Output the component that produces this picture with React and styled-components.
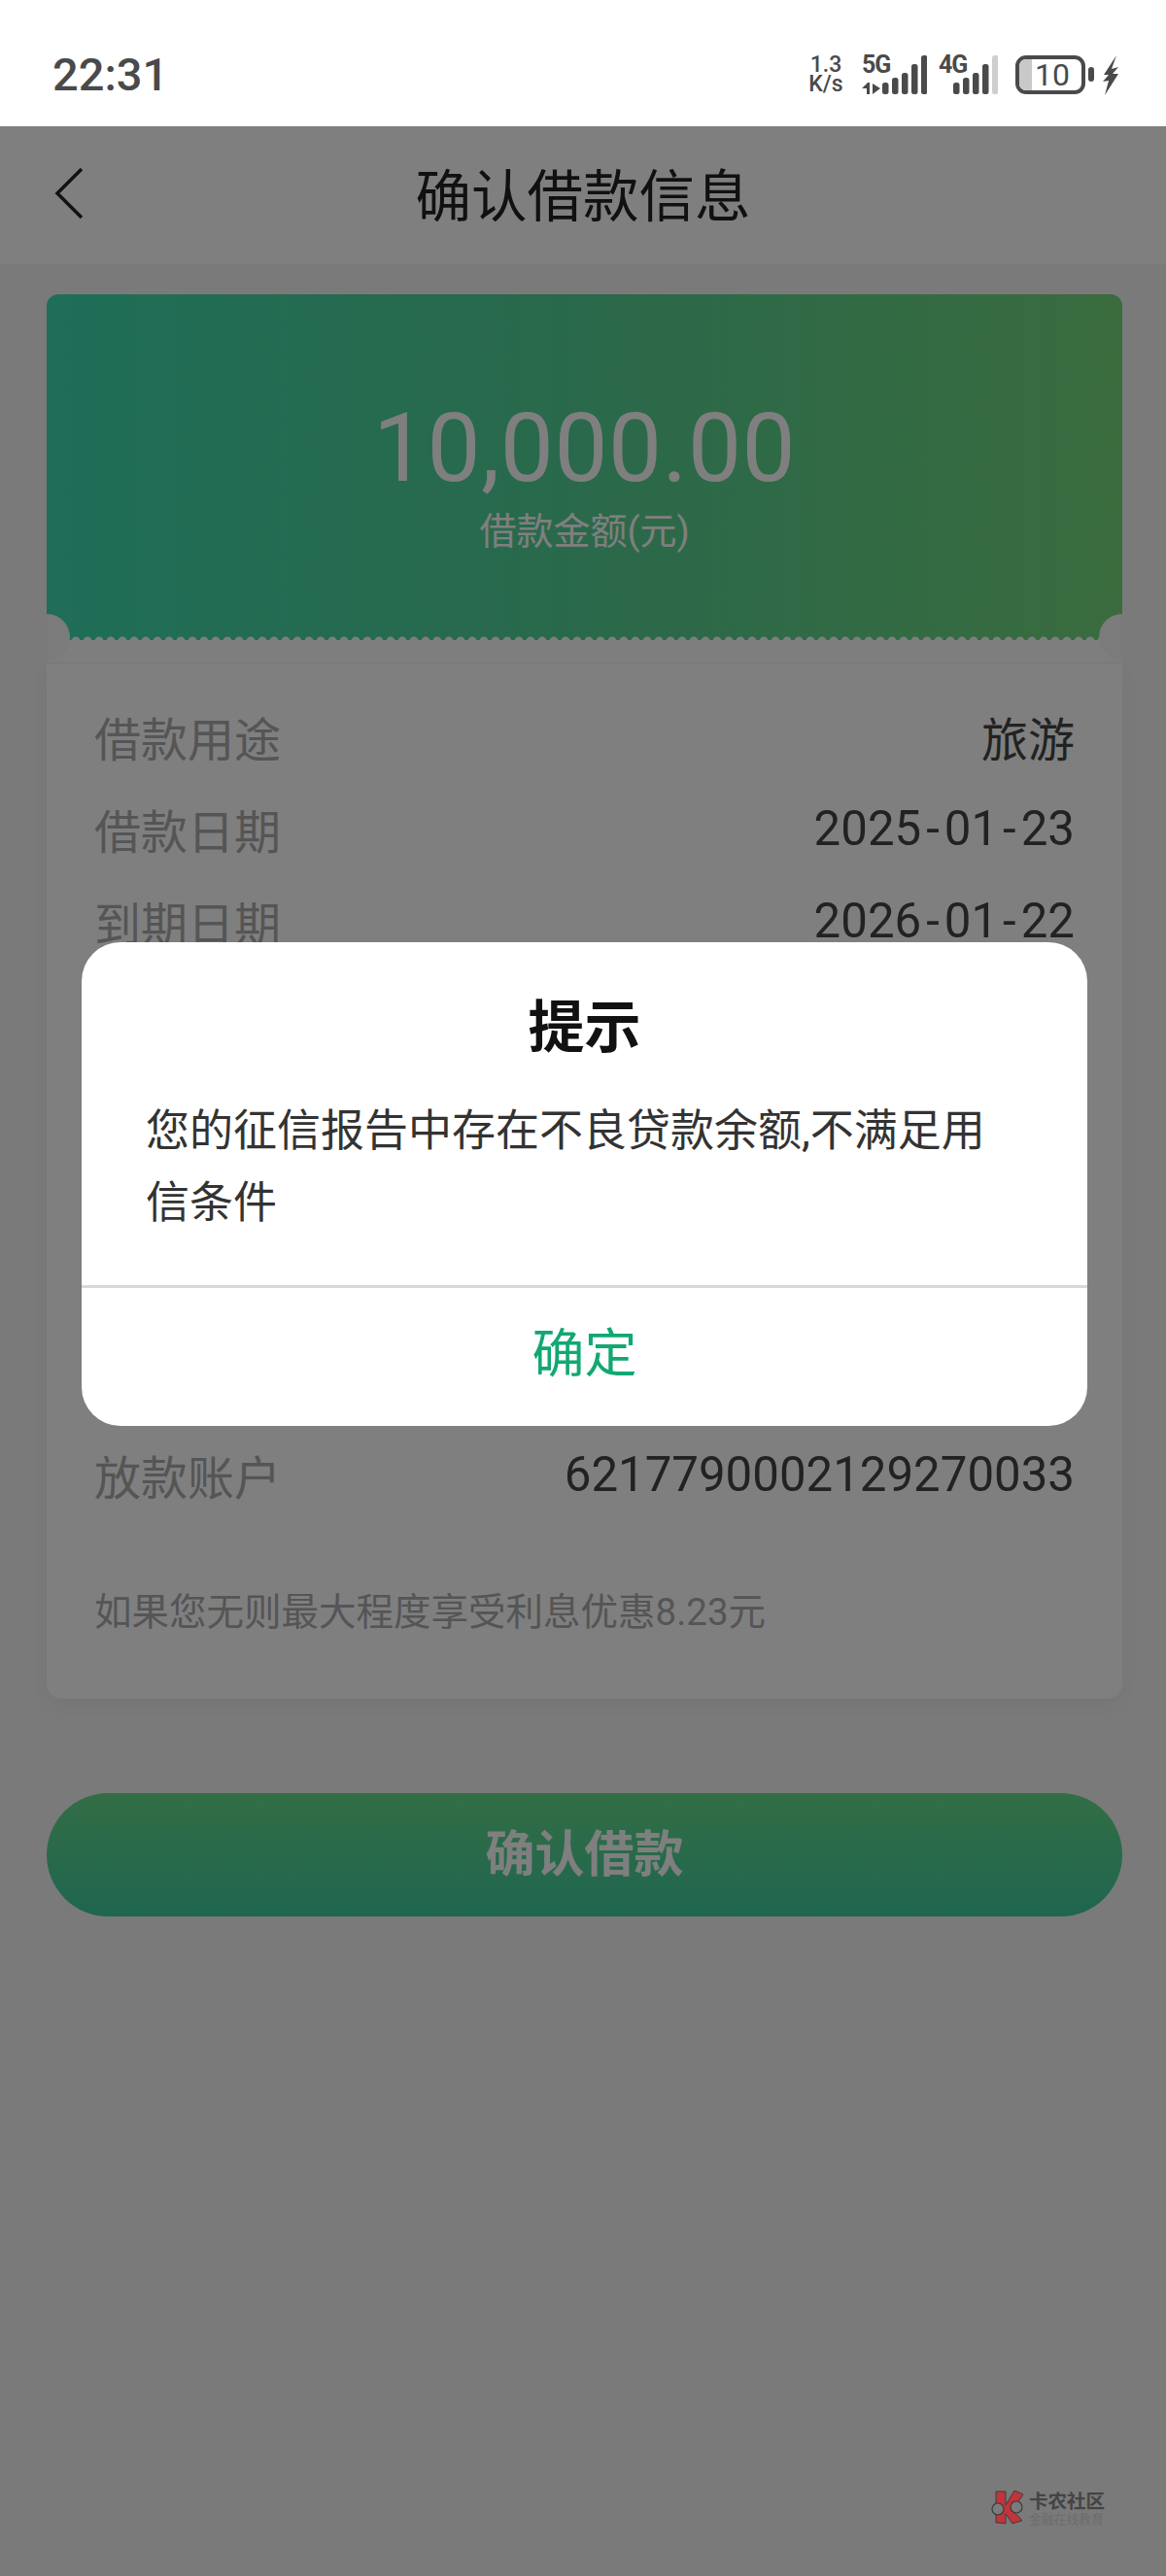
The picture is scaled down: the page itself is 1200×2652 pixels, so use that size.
import React from 'react';
import styled, { createGlobalStyle } from 'styled-components';

const GlobalStyle = createGlobalStyle`
  html, body {
    margin: 0;
    padding: 0;
    background: #f5f5f5;
  }
  * {
    box-sizing: border-box;
  }
`;

const FONT = `Roboto, "Noto Sans CJK SC", sans-serif`;

const Phone = styled.div`
  position: relative;
  width: 1200px;
  height: 2652px;
  overflow: hidden;
  font-family: ${FONT};
  background: #f5f5f5;
`;

const StatusBar = styled.div`
  height: 130px;
  padding: 57px 49px 0 54px;
  display: flex;
  justify-content: space-between;
  align-items: flex-start;
  background: #fff;
  color: #4a4a4a;
`;

const Clock = styled.div`
  font-size: 47px;
  font-weight: 500;
  line-height: 40px;
`;

const StatusIcons = styled.div`
  display: flex;
  align-items: flex-start;
`;

const NetSpeed = styled.div`
  width: 42px;
  margin-right: 16px;
  display: flex;
  flex-direction: column;
  align-items: center;
  font-size: 23px;
  font-weight: 500;
  line-height: 20px;
`;

const Signal = styled.div`
  position: relative;
  width: ${p => p.$width}px;
  height: 40px;
  margin-right: ${p => p.$gap}px;

  svg {
    display: block;
  }
`;

const SignalLabel = styled.span`
  position: absolute;
  left: 0;
  top: -3px;
  font-size: 25px;
  font-weight: 700;
  line-height: 25px;
  letter-spacing: -1px;
`;

const Battery = styled.div`
  position: relative;
  width: 72px;
  height: 40px;
  border: 4px solid #4a4a4a;
  border-radius: 11px;
  display: flex;
  align-items: center;
  justify-content: center;
  font-size: 32px;
  line-height: 32px;
  padding-left: 4px;

  &::before {
    content: '';
    position: absolute;
    left: 0;
    top: 0;
    bottom: 0;
    width: 13px;
    border-radius: 7px 0 0 7px;
    background: #c9c9c9;
  }
`;

const BatteryValue = styled.span`
  position: relative;
`;

const BatteryNub = styled.div`
  width: 6px;
  height: 15px;
  margin: 12px 9px 0 3px;
  border-radius: 3px;
  background: #4a4a4a;
`;

const Stage = styled.div`
  position: relative;
  height: 2522px;
`;

const NavBar = styled.div`
  position: relative;
  height: 142px;
  padding-bottom: 6px;
  display: flex;
  align-items: center;
  justify-content: center;
  background: #fff;
`;

const BackIcon = styled.svg`
  position: absolute;
  left: 54px;
  top: 42px;
`;

const NavTitle = styled.h1`
  margin: 0;
  font-size: 57.5px;
  font-weight: 400;
  color: #222;
`;

const Content = styled.div`
  padding: 31px 45px 0 48px;
`;

const Ticket = styled.div`
  position: relative;
  overflow: hidden;
  border-radius: 12px 12px 0 0;
`;

const Banner = styled.div`
  position: relative;
  height: 356px;
  padding-top: 107px;
  display: flex;
  flex-direction: column;
  align-items: center;
  background: linear-gradient(90deg, #3edcb0 0%, #54d296 50%, #74d87c 100%);
  color: #fff;

  &::after {
    content: '';
    position: absolute;
    left: 0;
    right: 0;
    bottom: -1px;
    height: 6px;
    background: radial-gradient(circle at 6px 6px, #fdfdff 4px, transparent 5px) repeat-x;
    background-size: 12px 6px;
  }
`;

const Amount = styled.div`
  font-size: 98px;
  line-height: 104px;
  letter-spacing: 0.5px;
`;

const AmountLabel = styled.div`
  margin-top: 11px;
  font-size: 38px;
  line-height: 44px;
`;

const TicketGap = styled.div`
  height: 23px;
  background: #fdfdff;
`;

const Notch = styled.div`
  position: absolute;
  top: 329px;
  ${p => p.$side}: -24px;
  width: 48px;
  height: 48px;
  border-radius: 50%;
  background: #f7f7f7;
`;

const DetailCard = styled.div`
  padding: 27px 49px 64px;
  border-top: 1px solid #f0f0f0;
  border-radius: 0 0 16px 16px;
  background: #fff;
  box-shadow: 0 6px 24px rgba(0, 0, 0, 0.05);
`;

const Row = styled.div`
  height: 95px;
  display: flex;
  justify-content: space-between;
  align-items: center;
`;

const CoveredRows = styled.div`
  height: 475px;
`;

const Label = styled.span`
  font-size: 48px;
  color: #aaa;
`;

const Value = styled.span`
  font-size: ${p => (p.$text ? 48 : 49.2)}px;
  color: #444;
`;

const Dash = styled.span`
  padding: 0 5px;
`;

const Note = styled.p`
  margin: 70px 0 0;
  font-size: 38.5px;
  line-height: 50px;
  color: #aaa;
`;

const ConfirmButton = styled.button`
  display: block;
  width: 100%;
  height: 127px;
  margin-top: 97px;
  padding: 0 0 10px;
  border: 0;
  border-radius: 64px;
  font-family: ${FONT};
  font-size: 51px;
  font-weight: 700;
  color: #fff;
  background: linear-gradient(180deg, #66dc8a 0%, #3ecca0 100%);
`;

const Overlay = styled.div`
  position: absolute;
  inset: 0;
  padding: 840px 81px 0 84px;
  background: rgba(0, 0, 0, 0.5);
`;

const Dialog = styled.div`
  height: 498px;
  border-radius: 40px;
  overflow: hidden;
  background: #fff;
`;

const DialogBody = styled.div`
  height: 356px;
  padding: 48px 66px 0;
  border-bottom: 3px solid #d9d9d9;
`;

const DialogTitle = styled.h2`
  margin: 0;
  font-size: 58px;
  font-weight: 700;
  line-height: 80px;
  text-align: center;
  color: #111;
`;

const DialogText = styled.p`
  margin: 30px 0 0;
  font-size: 45px;
  line-height: 74px;
  color: #333;
`;

const DialogAction = styled.button`
  display: block;
  width: 100%;
  height: 142px;
  padding: 0 0 16px;
  border: 0;
  font-family: ${FONT};
  font-size: 54px;
  color: #12a871;
  background: transparent;
`;

const Watermark = styled.div`
  position: absolute;
  left: 1020px;
  top: 2564px;
  display: flex;
  gap: 5px;
`;

const WatermarkText = styled.div`
  padding-top: 1px;
`;

const WatermarkName = styled.div`
  font-size: 19.5px;
  font-weight: 700;
  line-height: 22px;
  color: #444;
`;

const WatermarkSub = styled.div`
  font-size: 12.8px;
  line-height: 14px;
  color: #6c6c6c;
`;

const Bars = ({ width, bars, children }) => (
  <svg width={width} height="40" viewBox={`0 0 ${width} 40`}>
    {children}
    {bars.map(b => (
      <rect key={b.x} x={b.x} y={b.y} width="6.5" height={40 - b.y} rx="2.5" fill={b.fill || '#4a4a4a'} />
    ))}
  </svg>
);

const rows = [
  ['借款用途', '旅游', true],
  ['借款日期', <>2025<Dash>-</Dash>01<Dash>-</Dash>23</>],
  ['到期日期', <>2026<Dash>-</Dash>01<Dash>-</Dash>22</>],
];

export default function App() {
  return (
    <Phone>
      <GlobalStyle />
      <StatusBar>
        <Clock>22:31</Clock>
        <StatusIcons>
          <NetSpeed><span>1.3</span><span>K/s</span></NetSpeed>
          <Signal $width={67} $gap={12}>
            <Bars width={67} bars={[
              { x: 21, y: 28 }, { x: 31, y: 23 }, { x: 41, y: 18 }, { x: 51, y: 9 }, { x: 61, y: 0 },
            ]}>
              {/* up / down data arrows left of the bars */}
              <path d="M0 34 L6 28 H8 V40 H5 V34 Z" fill="#4a4a4a" />
              <path d="M11 29 L19 34 L11 40 Z" fill="#4a4a4a" />
            </Bars>
            <SignalLabel>5G</SignalLabel>
          </Signal>
          <Signal $width={61} $gap={18}>
            <Bars width={61} bars={[
              { x: 15, y: 28 }, { x: 25, y: 23 }, { x: 35, y: 18 }, { x: 45, y: 9 }, { x: 55, y: 0, fill: '#cfcfcf' },
            ]} />
            <SignalLabel>4G</SignalLabel>
          </Signal>
          <Battery><BatteryValue>10</BatteryValue></Battery>
          <BatteryNub />
          <svg width="16" height="41" viewBox="0 0 16 41">
            <path d="M14 0 L1 20 L6 20 L0 27 L6 26 L2 41 L16 19 L10 19 L16 12 L9 14 Z" fill="#4a4a4a" />
          </svg>
        </StatusIcons>
      </StatusBar>

      <Stage>
        <NavBar>
          <BackIcon width="34" height="54" viewBox="0 0 34 54">
            <path d="M30 2 L5 27 L30 52" fill="none" stroke="#222" strokeWidth="3.5" />
          </BackIcon>
          <NavTitle>确认借款信息</NavTitle>
        </NavBar>

        <Content>
          <Ticket>
            <Banner>
              <Amount>10,000.00</Amount>
              <AmountLabel>借款金额(元)</AmountLabel>
            </Banner>
            <TicketGap />
            <Notch $side="left" />
            <Notch $side="right" />
          </Ticket>
          <DetailCard>
            {rows.map(([label, value, isText]) => (
              <Row key={label}>
                <Label>{label}</Label>
                <Value $text={isText}>{value}</Value>
              </Row>
            ))}
            <CoveredRows />
            <Row>
              <Label>放款账户</Label>
              <Value>6217790002129270033</Value>
            </Row>
            <Note>如果您无则最大程度享受利息优惠8.23元</Note>
          </DetailCard>
          <ConfirmButton>确认借款</ConfirmButton>
        </Content>

        <Overlay>
          <Dialog>
            <DialogBody>
              <DialogTitle>提示</DialogTitle>
              <DialogText>您的征信报告中存在不良贷款余额,不满足用信条件</DialogText>
            </DialogBody>
            <DialogAction>确定</DialogAction>
          </Dialog>
        </Overlay>
      </Stage>

      <Watermark>
        <svg width="34" height="36" viewBox="0 0 34 36">
          <path d="M5 1 L15 1 L15 15 L24 0 L33 4 L22 20 L32 31 L22 34 L15 24 L15 34 L5 33 Z" fill="#c0343a" stroke="#3c3c3c" strokeWidth="1" />
          <circle cx="7" cy="19" r="6" fill="#7b7b7b" stroke="#3c3c3c" strokeWidth="1.2" />
          <circle cx="26" cy="17" r="6" fill="#7b7b7b" stroke="#3c3c3c" strokeWidth="1.2" />
        </svg>
        <WatermarkText>
          <WatermarkName>卡农社区</WatermarkName>
          <WatermarkSub>金融在线教育</WatermarkSub>
        </WatermarkText>
      </Watermark>
    </Phone>
  );
}
